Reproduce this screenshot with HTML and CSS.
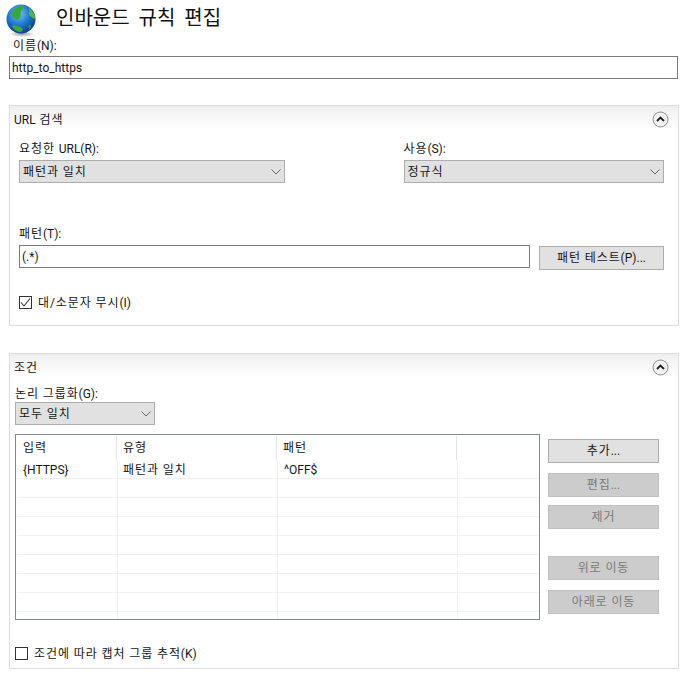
FILE: index.html
```html
<!DOCTYPE html>
<html>
<head>
  <title>인바운드 규칙 편집</title>
  <link rel="stylesheet" href="styles.css">
</head>
<body>
  <div class="title-row">
    <svg class="globe" width="32" height="34" viewBox="0 0 32 34">
      <defs>
        <radialGradient id="sea" cx="0.42" cy="0.32" r="0.75">
          <stop offset="0" stop-color="#7cc4f2"/>
          <stop offset="0.5" stop-color="#1f78cf"/>
          <stop offset="1" stop-color="#0c2f86"/>
        </radialGradient>
        <radialGradient id="shade" cx="0.5" cy="0.5" r="0.5">
          <stop offset="0" stop-color="#555" stop-opacity="0.6"/>
          <stop offset="1" stop-color="#555" stop-opacity="0"/>
        </radialGradient>
      </defs>
      <ellipse cx="17" cy="31" rx="13" ry="3" fill="url(#shade)"/>
      <circle cx="16" cy="16" r="14.5" fill="url(#sea)"/>
      <path d="M6 11 C8 6 13 3 18 2 C20 4 17 6 16 8 C15 11 17 13 14 16 C11 18 10 15 8 14 C7 13 6 12 6 11Z" fill="#37a83a"/>
      <path d="M24 5 C27 7 30 11 30 15 C28 17 27 14 25 13 C23 11 25 8 24 5Z" fill="#4fb53c"/>
      <path d="M7 23 C10 21 14 23 17 25 C19 27 17 29 14 29 C11 28 8 26 7 23Z" fill="#3aa83c"/>
      <path d="M24 22 C26 21 27 23 25 26 C24 27 23 24 24 22Z" fill="#2c8f4a"/>
    </svg>
    <h1 class="page-title">인바운드 규칙 편집</h1>
  </div>

  <label class="field-label name-label">이름<span class="en">(N):</span></label>
  <input class="text-box name-input" type="text" value="http_to_https">

  <div class="panel url-panel">
    <div class="panel-head">
      <span class="panel-title"><span class="en">URL</span> 검색</span>
      <svg class="collapse" width="17" height="17" viewBox="0 0 17 17">
        <circle cx="8.5" cy="8.5" r="7.5" fill="#f1f1f1" stroke="#8f8f8f"/>
        <path d="M5 10 L8.5 6.5 L12 10" fill="none" stroke="#222" stroke-width="1.8"/>
      </svg>
    </div>
    <div class="url-body">
      <div class="select-row">
        <div class="field url-field">
          <label class="field-label">요청한 <span class="en">URL(R):</span></label>
          <div class="select-box">
            <span>패턴과 일치</span>
            <svg width="10" height="6" viewBox="0 0 10 6"><path d="M0.5 0.5 L5 5 L9.5 0.5" fill="none" stroke="#666"/></svg>
          </div>
        </div>
        <div class="field use-field">
          <label class="field-label">사용<span class="en">(S):</span></label>
          <div class="select-box">
            <span>정규식</span>
            <svg width="10" height="6" viewBox="0 0 10 6"><path d="M0.5 0.5 L5 5 L9.5 0.5" fill="none" stroke="#666"/></svg>
          </div>
        </div>
      </div>

      <label class="field-label pattern-label">패턴<span class="en">(T):</span></label>
      <div class="pattern-row">
        <input class="text-box pattern-input" type="text" value="(.*)">
        <button class="btn test-btn">패턴 테스트<span class="en">(P)...</span></button>
      </div>

      <div class="check-row ignore-case">
        <span class="check-box">
          <svg width="11" height="11" viewBox="0 0 11 11"><path d="M1 5.5 L4 9 L10 1.5" fill="none" stroke="#333" stroke-width="1.1"/></svg>
        </span>
        <span>대/소문자 무시<span class="en">(I)</span></span>
      </div>
    </div>
  </div>

  <div class="panel cond-panel">
    <div class="panel-head">
      <span class="panel-title">조건</span>
      <svg class="collapse" width="17" height="17" viewBox="0 0 17 17">
        <circle cx="8.5" cy="8.5" r="7.5" fill="#f1f1f1" stroke="#8f8f8f"/>
        <path d="M5 10 L8.5 6.5 L12 10" fill="none" stroke="#222" stroke-width="1.8"/>
      </svg>
    </div>
    <div class="cond-body">
      <label class="field-label">논리 그룹화<span class="en">(G):</span></label>
      <div class="select-box group-select">
        <span>모두 일치</span>
        <svg width="10" height="6" viewBox="0 0 10 6"><path d="M0.5 0.5 L5 5 L9.5 0.5" fill="none" stroke="#666"/></svg>
      </div>

      <div class="list-row-wrap">
        <div class="list">
          <div class="list-head">
            <div>입력</div>
            <div>유형</div>
            <div>패턴</div>
            <div></div>
          </div>
          <div class="list-item"><div class="en">{HTTPS}</div><div>패턴과 일치</div><div class="en">^OFF$</div><div></div></div>
          <div class="list-item"><div></div><div></div><div></div><div></div></div>
          <div class="list-item"><div></div><div></div><div></div><div></div></div>
          <div class="list-item"><div></div><div></div><div></div><div></div></div>
          <div class="list-item"><div></div><div></div><div></div><div></div></div>
          <div class="list-item"><div></div><div></div><div></div><div></div></div>
          <div class="list-item"><div></div><div></div><div></div><div></div></div>
          <div class="list-item"><div></div><div></div><div></div><div></div></div>
          <div class="list-item"><div></div><div></div><div></div><div></div></div>
        </div>
        <div class="side-buttons">
          <button class="btn">추가<span class="en">...</span></button>
          <button class="btn disabled gap-10">편집<span class="en">...</span></button>
          <button class="btn disabled gap-8">제거</button>
          <button class="btn disabled gap-27">위로 이동</button>
          <button class="btn disabled gap-10">아래로 이동</button>
        </div>
      </div>

      <div class="check-row track-groups">
        <span class="check-box"></span>
        <span>조건에 따라 캡처 그룹 추적<span class="en">(K)</span></span>
      </div>
    </div>
  </div>
</body>
</html>
```

FILE: styles.css
```css
html, body {
  height: 100%;
}

body {
  margin: 0;
  padding: 0 8px 0 9px;
  background-color: #fff;
  color: #161616;
  font-family: Roboto, "Noto Sans CJK KR", sans-serif;
  font-size: 12px;
  line-height: 16px;
  letter-spacing: 0.9px;
  overflow: hidden;
}

/* latin text keeps its own width, only the hangul is spaced out */
.en {
  letter-spacing: 0;
}

.title-row {
  display: flex;
  height: 37px;
  margin-left: -4px;
}

.globe {
  margin-top: 3px;
}

.page-title {
  margin: 5px 0 0 19px;
  font-size: 20px;
  font-weight: normal;
  line-height: 26px;
  letter-spacing: 0;
  word-spacing: 4px;
  color: #111;
}

.field-label {
  display: block;
  height: 16px;
  padding-top: 1px;
  box-sizing: border-box;
}

.name-label {
  margin-left: 4px;
  margin-bottom: 3px;
}

.text-box {
  display: block;
  height: 23px;
  padding: 0 2px;
  border: 1px solid #7a7a7a;
  box-sizing: border-box;
  font: inherit;
  letter-spacing: 0;
  color: #161616;
  outline: none;
}

.name-input {
  width: 669px;
}

.panel {
  width: 670px;
  border: 1px solid #dcdcdc;
  box-sizing: border-box;
}

.url-panel {
  height: 221px;
  margin-top: 26px;
}

.cond-panel {
  height: 316px;
  margin-top: 27px;
}

.panel-head {
  display: flex;
  align-items: center;
  justify-content: space-between;
  height: 24px;
  padding: 2px 9px 0 4px;
  box-sizing: border-box;
  background: linear-gradient(#efefef, #fff);
}

.panel-title {
  margin-top: 2px;
}

.collapse {
  display: block;
}

.url-body {
  padding: 10px 14px 0 9px;
}

.select-row {
  display: flex;
  gap: 119px;
}

.url-field {
  width: 266px;
}

.use-field {
  width: 261px;
}

.select-box {
  display: flex;
  align-items: center;
  justify-content: space-between;
  height: 23px;
  margin-top: 4px;
  padding: 0 3px 0 3px;
  background-color: #e1e1e1;
  border: 1px solid #adadad;
  box-sizing: border-box;
}

.pattern-label {
  margin-top: 42px;
  margin-bottom: 4px;
}

.pattern-row {
  display: flex;
  gap: 9px;
}

.pattern-input {
  width: 511px;
}

.btn {
  display: block;
  height: 24px;
  padding: 0;
  background-color: #e1e1e1;
  border: 1px solid #adadad;
  box-sizing: border-box;
  color: #161616;
  font: inherit;
  letter-spacing: inherit;
}

.test-btn {
  width: 125px;
  margin-top: 1px;
}

.check-row {
  display: flex;
  align-items: center;
  gap: 6px;
  height: 15px;
}

.check-box {
  display: flex;
  align-items: center;
  justify-content: center;
  width: 13px;
  height: 13px;
  border: 1px solid #333;
  box-sizing: border-box;
}

.ignore-case {
  margin-top: 25px;
}

.cond-body {
  padding: 7px 0 0 5px;
}

.group-select {
  width: 140px;
  margin-top: 1px;
}

.list-row-wrap {
  display: flex;
  gap: 8px;
  margin-top: 9px;
}

.list {
  width: 525px;
  height: 186px;
  padding: 1px;
  border: 1px solid #82878c;
  box-sizing: border-box;
  overflow: hidden;
}

.list-head {
  display: grid;
  grid-template-columns: 100px 160px 180px 82px;
  height: 24px;
}

.list-head div {
  padding: 4px 0 0 6px;
  border-right: 1px solid #e5e5e5;
  box-sizing: border-box;
}

.list-head div:last-child {
  border-right: none;
}

.list-item {
  display: grid;
  grid-template-columns: 101px 160px 180px 80px;
  height: 19px;
  border-bottom: 1px solid #f0f0f0;
  box-sizing: border-box;
}

.list-item div {
  padding: 1px 0 0 6px;
  border-right: 1px solid #f0f0f0;
  box-sizing: border-box;
  line-height: 18px;
}

.list-item div:nth-child(2) {
  padding-left: 5px;
}

.list-item div:last-child {
  border-right: none;
}

.side-buttons {
  width: 111px;
  padding-top: 5px;
}

.side-buttons .btn {
  width: 111px;
}

.disabled {
  background-color: #ccc;
  border-color: #bfbfbf;
  color: #7a7a7a;
}

.gap-8 {
  margin-top: 8px;
}

.gap-10 {
  margin-top: 10px;
}

.gap-27 {
  margin-top: 27px;
}

.track-groups {
  margin-top: 26px;
}
```
